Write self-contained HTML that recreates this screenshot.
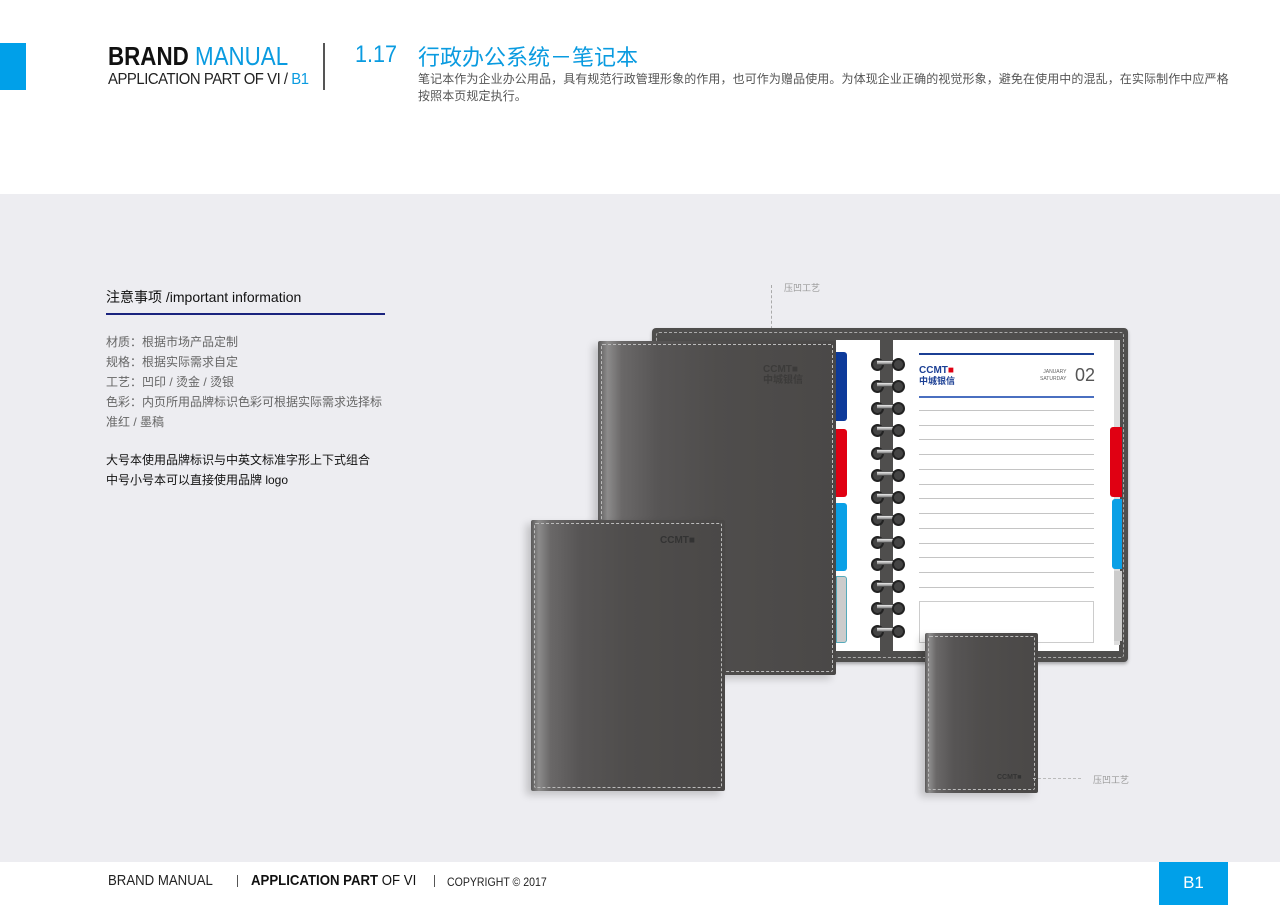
<!DOCTYPE html>
<html><head><meta charset="utf-8"><style>
*{margin:0;padding:0;box-sizing:border-box}
body{width:1280px;height:905px;position:relative;background:#fff;font-family:"Liberation Sans","Noto Sans CJK SC",sans-serif;overflow:hidden}
.a{position:absolute}
.sx{transform-origin:left top;white-space:nowrap}
.cover{position:absolute;background:linear-gradient(90deg,#5a5959 0%,#8c8b8b 4%,#6a6868 10%,#575555 25%,#4f4d4c 50%,#4a4847 100%);border-radius:2px;box-shadow:-5px 4px 8px rgba(0,0,0,.18)}
.cover:after{content:"";position:absolute;left:3px;top:3px;right:3px;bottom:3px;border:1px dashed #bbb;border-radius:2px}
.ln{position:absolute;left:919px;width:175px;height:1px;background:#c4c4c4}
.ring{position:absolute;left:871px;width:34px;height:9px}
.ring:before,.ring:after{content:"";position:absolute;top:0;width:9px;height:9px;border-radius:50%;background:#444;border:2px solid #222}
.ring:before{left:0}.ring:after{right:0}
.ring i{position:absolute;left:6px;right:6px;top:2px;height:5px;background:linear-gradient(#eee,#888);border-top:1px solid #555;border-bottom:1px solid #555}
</style></head><body>
<div class="a" style="left:0;top:43px;width:26px;height:47px;background:#00a0e9"></div>
<div class="a sx" style="left:108px;top:41px;font-size:26px;line-height:30px;transform:scaleX(0.86)"><b style="color:#111">BRAND</b> <span style="color:#0a9be0">MANUAL</span></div>
<div class="a sx" style="left:108px;top:71px;font-size:16px;color:#222;letter-spacing:-0.5px;transform:scaleX(0.93)">APPLICATION PART OF VI / <span style="color:#0a9be0">B1</span></div>
<div class="a" style="left:323px;top:43px;width:2px;height:47px;background:#555"></div>
<div class="a sx" style="left:355px;top:41px;font-size:24px;color:#0a9be0;transform:scaleX(0.9)">1.17</div>
<div class="a" style="left:418px;top:40px;font-size:22px;color:#0a9be0">行政办公系统－笔记本</div>
<div class="a" style="left:418px;top:71px;width:815px;font-size:12px;line-height:17px;color:#555;letter-spacing:0.1px">笔记本作为企业办公用品，具有规范行政管理形象的作用，也可作为赠品使用。为体现企业正确的视觉形象，避免在使用中的混乱，在实际制作中应严格按照本页规定执行。</div>

<div class="a" style="left:0;top:194px;width:1280px;height:668px;background:#ededf1"></div>
<div class="a" style="left:106px;top:287px;font-size:14px;color:#111">注意事项 /important information</div>
<div class="a" style="left:106px;top:313px;width:279px;height:2px;background:#1a237e"></div>
<div class="a" style="left:106px;top:332px;font-size:12px;line-height:20px;color:#666">材质：根据市场产品定制<br>规格：根据实际需求自定<br>工艺：凹印 / 烫金 / 烫银<br>色彩：内页所用品牌标识色彩可根据实际需求选择标<br>准红 / 墨稿</div>
<div class="a" style="left:106px;top:450px;font-size:12px;line-height:20px;color:#111">大号本使用品牌标识与中英文标准字形上下式组合<br>中号小号本可以直接使用品牌 logo</div>

<div class="a" style="left:784px;top:281px;font-size:9px;color:#999">压凹工艺</div>
<div class="a" style="left:771px;top:285px;height:80px;border-left:1px dashed #aaa"></div>

<div class="a" style="left:652px;top:328px;width:476px;height:334px;background:#4f4e4d;border-radius:4px;box-shadow:0 2px 3px rgba(0,0,0,.3)"></div>
<div class="a" style="left:656px;top:332px;width:468px;height:326px;border:1px dashed #aaa;border-radius:3px"></div>
<div class="a" style="left:836px;top:340px;width:46px;height:311px;background:#fff"></div>
<div class="a" style="left:893px;top:340px;width:226px;height:311px;background:#fff"></div>
<div class="a" style="left:1114px;top:340px;width:6px;height:305px;background:#ddd"></div>
<div class="a" style="left:880px;top:340px;width:13px;height:311px;background:#4f4e4d"></div>
<div class="a" style="left:836px;top:352px;width:11px;height:69px;background:#0d3a9a;border-radius:0 3px 3px 0"></div>
<div class="a" style="left:836px;top:429px;width:11px;height:68px;background:#e00012;border-radius:0 3px 3px 0"></div>
<div class="a" style="left:836px;top:503px;width:11px;height:68px;background:#0aa0e6;border-radius:0 3px 3px 0"></div>
<div class="a" style="left:836px;top:576px;width:11px;height:67px;background:#ccc;border:1px solid #5ab;border-radius:0 3px 3px 0"></div>
<div class="a" style="left:1110px;top:427px;width:12px;height:70px;background:#e00012;border-radius:3px 0 0 3px"></div>
<div class="a" style="left:1112px;top:499px;width:10px;height:70px;background:#0aa0e6;border-radius:3px 0 0 3px"></div>
<div class="a" style="left:1114px;top:571px;width:8px;height:70px;background:#ccc"></div>
<div class="a" style="left:919px;top:353px;width:175px;height:2px;background:#1b3f94"></div>
<div class="a" style="left:919px;top:396px;width:175px;height:2px;background:#4a6fc0"></div>
<div class="a" style="left:919px;top:366px;font-size:10px;font-weight:bold;color:#1b3f94;line-height:10px">CCMT<span style="color:#e00012">■</span><br><span style="font-size:9px">中城银信</span></div>
<div class="a" style="left:1040px;top:369px;font-size:5px;color:#666;text-align:right;line-height:7px">JANUARY<br>SATURDAY</div>
<div class="a" style="left:1075px;top:365px;font-size:18px;color:#555">02</div>
<div class="ln" style="top:410px"></div><div class="ln" style="top:425px"></div><div class="ln" style="top:439px"></div><div class="ln" style="top:454px"></div><div class="ln" style="top:469px"></div><div class="ln" style="top:484px"></div><div class="ln" style="top:498px"></div><div class="ln" style="top:513px"></div><div class="ln" style="top:528px"></div><div class="ln" style="top:543px"></div><div class="ln" style="top:557px"></div><div class="ln" style="top:572px"></div><div class="ln" style="top:587px"></div>
<div class="a" style="left:919px;top:601px;width:175px;height:42px;border:1px solid #ccc"></div>
<div class="ring" style="top:358px"><i></i></div><div class="ring" style="top:380px"><i></i></div><div class="ring" style="top:402px"><i></i></div><div class="ring" style="top:424px"><i></i></div><div class="ring" style="top:447px"><i></i></div><div class="ring" style="top:469px"><i></i></div><div class="ring" style="top:491px"><i></i></div><div class="ring" style="top:513px"><i></i></div><div class="ring" style="top:536px"><i></i></div><div class="ring" style="top:558px"><i></i></div><div class="ring" style="top:580px"><i></i></div><div class="ring" style="top:602px"><i></i></div><div class="ring" style="top:625px"><i></i></div>

<div class="cover" style="left:598px;top:341px;width:238px;height:334px"></div>
<div class="a" style="left:763px;top:364px;font-size:10px;font-weight:bold;color:#3c3b3a;line-height:11px">CCMT■<br>中城银信</div>
<div class="cover" style="left:531px;top:520px;width:194px;height:271px"></div>
<div class="a" style="left:660px;top:535px;font-size:10px;font-weight:bold;color:#333">CCMT■</div>
<div class="cover" style="left:925px;top:633px;width:113px;height:160px"></div>
<div class="a" style="left:997px;top:774px;font-size:7px;font-weight:bold;color:#333">CCMT■</div>
<div class="a" style="left:1033px;top:778px;width:48px;border-top:1px dashed #bbb"></div>
<div class="a" style="left:1093px;top:773px;font-size:9px;color:#999">压凹工艺</div>

<div class="a sx" style="left:108px;top:872px;font-size:15px;color:#222;transform:scaleX(0.88)">BRAND MANUAL</div>
<div class="a" style="left:237px;top:875px;width:1px;height:12px;background:#555"></div>
<div class="a sx" style="left:251px;top:872px;font-size:15px;color:#111;transform:scaleX(0.88)"><b>APPLICATION PART</b> OF VI</div>
<div class="a" style="left:434px;top:875px;width:1px;height:12px;background:#555"></div>
<div class="a sx" style="left:447px;top:875px;font-size:12px;color:#222;transform:scaleX(0.88)">COPYRIGHT © 2017</div>
<div class="a" style="left:1159px;top:862px;width:69px;height:43px;background:#00a0e9;color:#fff;font-size:17px;text-align:center;line-height:41px">B1</div>
</body></html>
